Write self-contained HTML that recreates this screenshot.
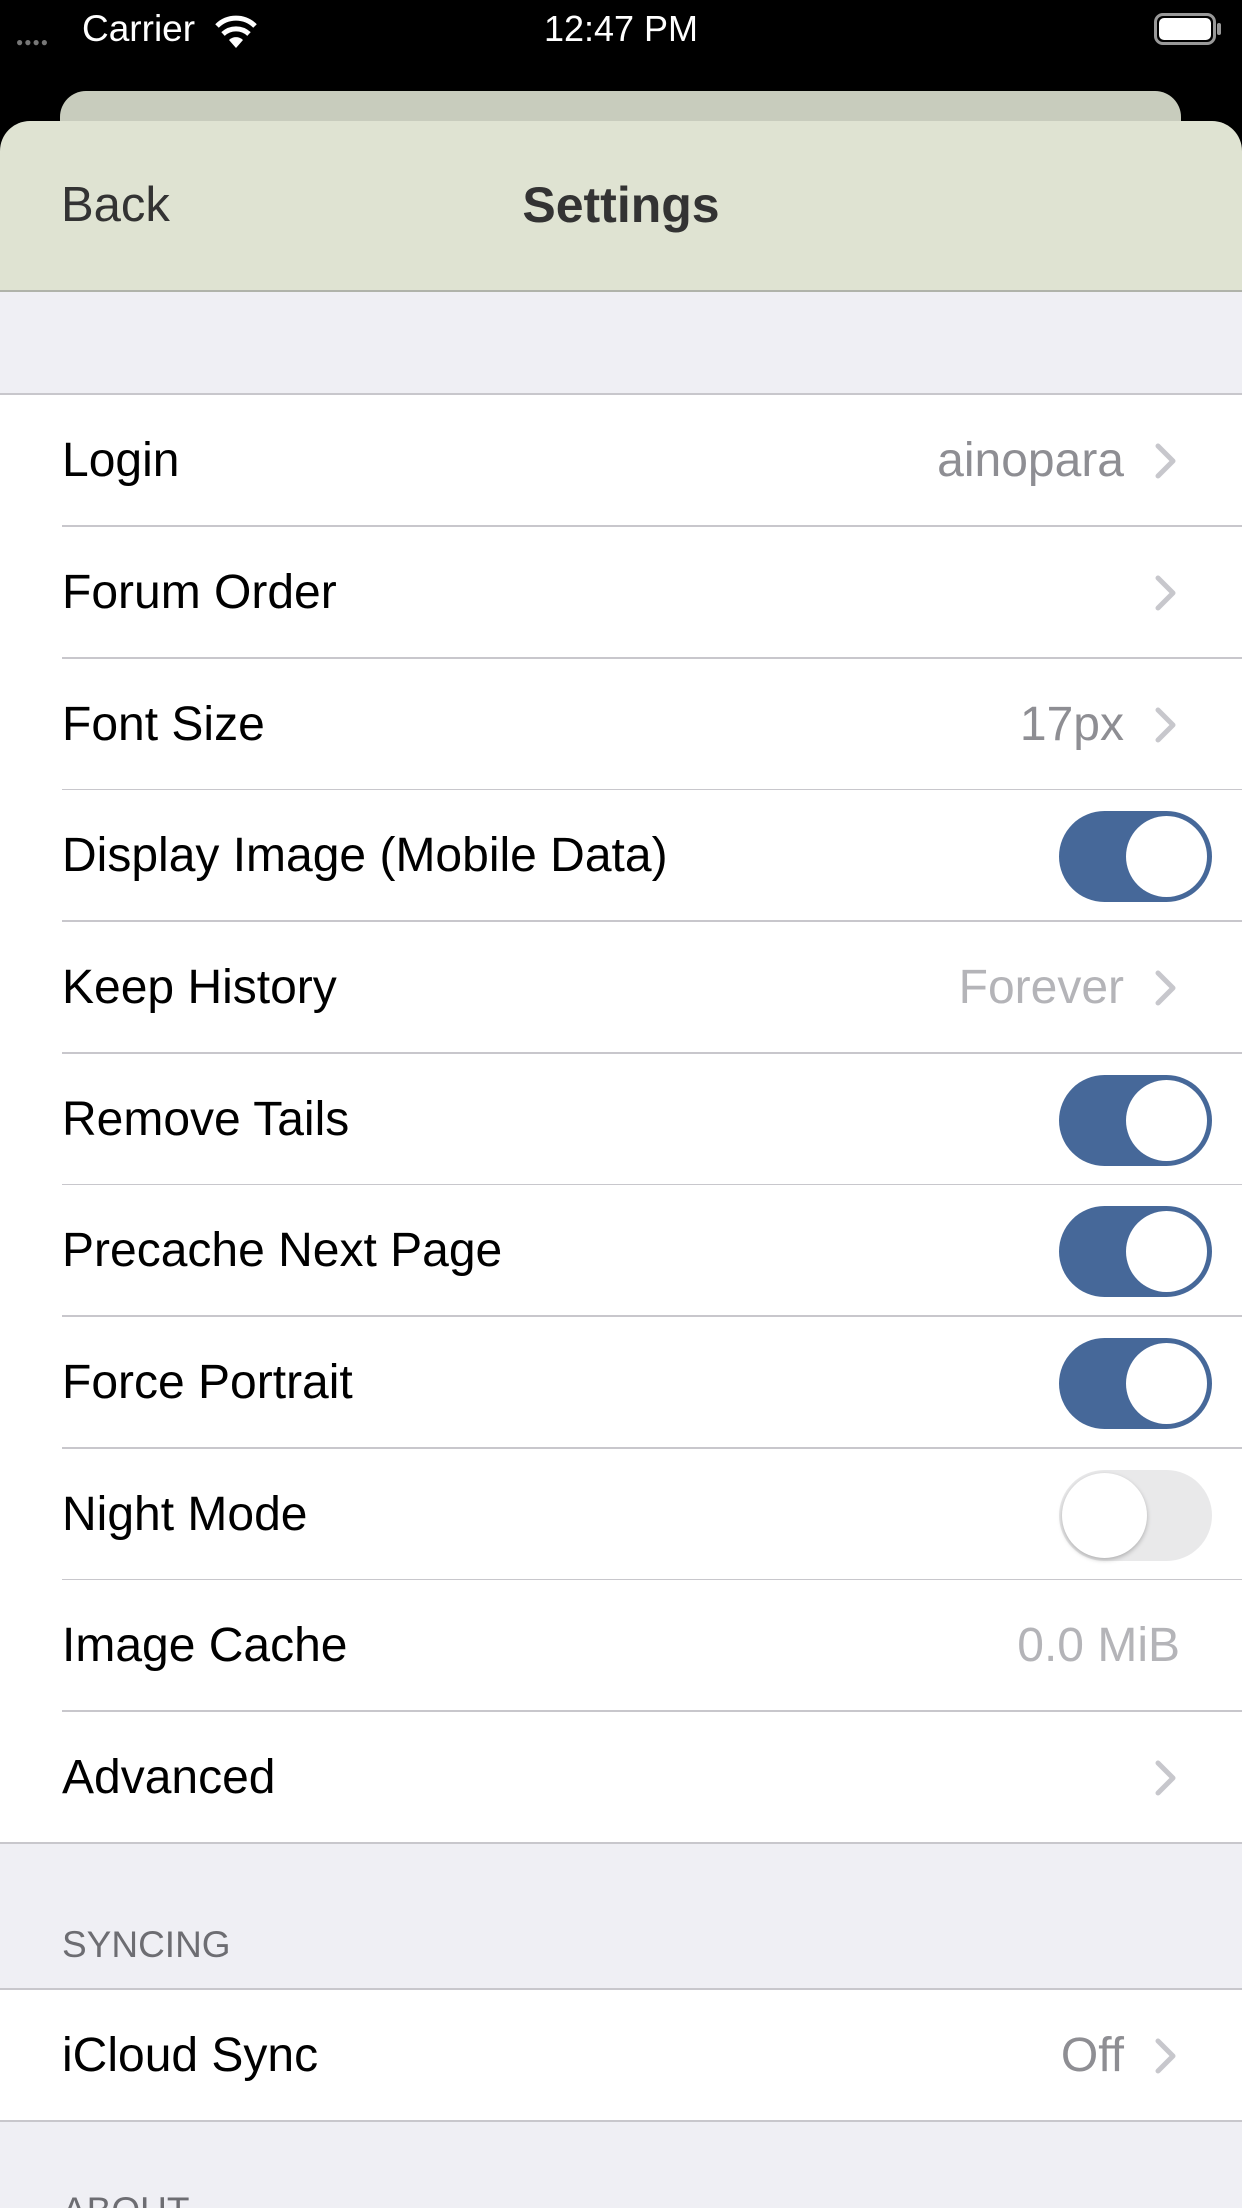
<!DOCTYPE html>
<html><head><style>
*{margin:0;padding:0;box-sizing:border-box}
html,body{width:1242px;height:2208px;overflow:hidden}
body{background:#efeff4;position:relative;font-family:"Liberation Sans",sans-serif}
.abs{position:absolute}
.row{position:absolute;left:0;width:1242px;height:132px;background:#fff}
.lbl{position:absolute;left:62px;top:0;height:132px;line-height:132px;font-size:48px;color:#000}
.val{position:absolute;right:118px;top:0;height:132px;line-height:132px;font-size:48px;color:#8e8e93}
.sep{position:absolute;left:62px;right:0;bottom:0;height:2px;background:#c8c7cc}
.chev{position:absolute;left:1155px;top:48px;width:22px;height:36px}
.tog{position:absolute;left:1059px;top:21px;width:153px;height:91px;border-radius:46px;background:#466899}
.tog::after{content:"";position:absolute;right:5px;top:5px;width:81px;height:81px;border-radius:50%;background:#fff}
.off{background:#e9e9ea}
.off::after{left:3px;right:auto;top:3px;width:85px;height:85px;box-shadow:0 2px 5px rgba(0,0,0,.25)}
</style></head><body>
<div class="abs" style="left:0;top:0;width:1242px;height:200px;background:#000"></div>
<div class="abs" style="left:16px;top:35px;font-size:12px;color:#777;letter-spacing:1px">●●●●</div>
<div class="abs" style="left:82px;top:7px;font-size:37px;color:#fff;line-height:44px">Carrier</div>
<svg class="abs" style="left:214px;top:14px" width="44" height="36" viewBox="0 0 44 36"><path d="M22 34 L15 26 A10 10 0 0 1 29 26 Z" fill="#fff"/><path d="M9 20 A19 19 0 0 1 35 20" stroke="#fff" stroke-width="5" fill="none"/><path d="M3 12 A27 27 0 0 1 41 12" stroke="#fff" stroke-width="5" fill="none"/></svg>
<div class="abs" style="left:0;width:1242px;top:7px;text-align:center;font-size:36px;color:#fff;line-height:44px">12:47 PM</div>
<div class="abs" style="left:1154px;top:13px;width:62px;height:32px;border:3px solid #999;border-radius:9px"></div>
<div class="abs" style="left:1159px;top:18px;width:52px;height:22px;background:#fff;border-radius:5px"></div>
<div class="abs" style="left:1217px;top:23px;width:4px;height:12px;background:#999;border-radius:2px"></div>
<div class="abs" style="left:60px;top:91px;width:1121px;height:120px;background:#c8ccbd;border-radius:26px 26px 0 0"></div>
<div class="abs" style="left:0;top:121px;width:1242px;height:171px;background:#dfe3d2;border-radius:30px 30px 0 0;border-bottom:2px solid #b0b3aa"></div>
<div class="abs" style="left:61px;top:175px;font-size:49px;color:#333;line-height:60px">Back</div>
<div class="abs" style="left:0;width:1242px;top:175px;text-align:center;font-size:50px;font-weight:bold;color:#333;line-height:60px">Settings</div>
<div class="abs" style="left:0;top:393px;width:1242px;height:2px;background:#c8c7cc"></div>

<div class="row" style="top:395px"><div class="lbl">Login</div><div class="val">ainopara</div><svg class="chev" viewBox="0 0 22 36"><path d="M3 3 L18 18 L3 33" stroke="#c7c7cc" stroke-width="5" fill="none" stroke-linecap="round" stroke-linejoin="round"/></svg><div class="sep"></div></div>
<div class="row" style="top:527px"><div class="lbl">Forum Order</div><svg class="chev" viewBox="0 0 22 36"><path d="M3 3 L18 18 L3 33" stroke="#c7c7cc" stroke-width="5" fill="none" stroke-linecap="round" stroke-linejoin="round"/></svg><div class="sep"></div></div>
<div class="row" style="top:659px"><div class="lbl">Font Size</div><div class="val">17px</div><svg class="chev" viewBox="0 0 22 36"><path d="M3 3 L18 18 L3 33" stroke="#c7c7cc" stroke-width="5" fill="none" stroke-linecap="round" stroke-linejoin="round"/></svg><div class="sep"></div></div>
<div class="row" style="top:790px"><div class="lbl">Display Image (Mobile Data)</div><div class="tog"></div><div class="sep"></div></div>
<div class="row" style="top:922px"><div class="lbl">Keep History</div><div class="val" style="color:#b4b4b8">Forever</div><svg class="chev" viewBox="0 0 22 36"><path d="M3 3 L18 18 L3 33" stroke="#c7c7cc" stroke-width="5" fill="none" stroke-linecap="round" stroke-linejoin="round"/></svg><div class="sep"></div></div>
<div class="row" style="top:1054px"><div class="lbl">Remove Tails</div><div class="tog"></div><div class="sep"></div></div>
<div class="row" style="top:1185px"><div class="lbl">Precache Next Page</div><div class="tog"></div><div class="sep"></div></div>
<div class="row" style="top:1317px"><div class="lbl">Force Portrait</div><div class="tog"></div><div class="sep"></div></div>
<div class="row" style="top:1449px"><div class="lbl">Night Mode</div><div class="tog off"></div><div class="sep"></div></div>
<div class="row" style="top:1580px"><div class="lbl">Image Cache</div><div class="val" style="right:62px;color:#b4b4b8">0.0 MiB</div><div class="sep"></div></div>
<div class="row" style="top:1712px"><div class="lbl">Advanced</div><svg class="chev" viewBox="0 0 22 36"><path d="M3 3 L18 18 L3 33" stroke="#c7c7cc" stroke-width="5" fill="none" stroke-linecap="round" stroke-linejoin="round"/></svg><div class="sep" style="left:0"></div></div>

<div class="abs" style="left:62px;top:1920px;font-size:37px;color:#6d6d72;line-height:50px">SYNCING</div>
<div class="abs" style="left:0;top:1988px;width:1242px;height:2px;background:#c8c7cc"></div>
<div class="row" style="top:1990px"><div class="lbl">iCloud Sync</div><div class="val">Off</div><svg class="chev" viewBox="0 0 22 36"><path d="M3 3 L18 18 L3 33" stroke="#c7c7cc" stroke-width="5" fill="none" stroke-linecap="round" stroke-linejoin="round"/></svg><div class="sep" style="left:0"></div></div>
<div class="abs" style="left:62px;top:2186px;font-size:37px;color:#6d6d72;line-height:50px">ABOUT</div>
</body></html>
